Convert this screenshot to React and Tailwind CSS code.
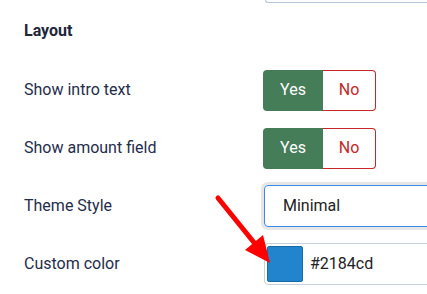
import React from 'react';

function Toggle() {
    return (
        <div className="flex h-[41px] w-[113px] shrink-0 text-[16px]">
            <div className="flex w-[60px] items-center justify-center rounded-l-[4px] bg-[#457d58] text-white">Yes</div>
            <div className="flex flex-1 items-center justify-center rounded-r-[4px] border border-l-0 border-[#c52827] text-[#c52827]">No</div>
        </div>
    );
}

function Row({ label, children }) {
    return (
        <div className="flex h-[42px] items-center mb-4">
            <div className="w-[239px] shrink-0 text-[16px] text-[#1f2d4b]">{label}</div>
            {children}
        </div>
    );
}

export default function App() {
    return (
        <div className="relative h-[294px] w-[427px] overflow-hidden bg-white" style={{ fontFamily: 'Roboto, sans-serif' }}>
            <div className="ml-[265px] h-[3px] w-[200px] rounded-bl-[4px] border-b border-l border-[#b8c4dc]"></div>

            <div className="pl-6">
                <h2 className="mt-[17px] mb-[27px] h-[22px] text-[16px] font-bold leading-[22px] text-[#22263a]">Layout</h2>

                <Row label="Show intro text">
                    <Toggle />
                </Row>
                <Row label="Show amount field">
                    <Toggle />
                </Row>
                <Row label="Theme Style">
                    <div className="ml-px flex h-[42px] w-[200px] shrink-0 items-center rounded-[4px] border border-[#3b8ae8] pl-[18px] text-[16px] text-[#222] shadow-[0_0_0_3px_#e6e6e6]">
                        Minimal
                    </div>
                </Row>
                <Row label="Custom color">
                    <div className="ml-px flex h-[42px] w-[200px] shrink-0 items-center gap-[7px] rounded-[4px] border border-[#c8d0dc] pl-[2px] text-[16px] text-[#222]">
                        <div className="h-[36px] w-[36px] rounded-[2px] border border-[#1a6aa6] bg-[#2184cd]"></div>
                        <span>#2184cd</span>
                    </div>
                </Row>
            </div>

            <svg className="absolute left-0 top-0" width="427" height="294" viewBox="0 0 427 294">
                <line x1="218" y1="198" x2="256" y2="245" stroke="#ff0000" strokeWidth="5" strokeLinecap="round" />
                <polygon points="270,263 245,250 263,235" fill="#ff0000" />
            </svg>
        </div>
    );
}
